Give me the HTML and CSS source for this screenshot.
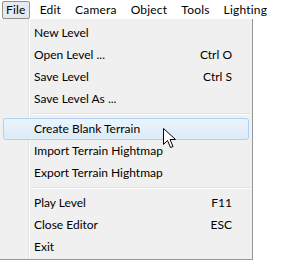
FILE: index.html
```html
<!DOCTYPE html>
<html>
    <head>
        <meta charset="utf-8">
        <link rel="stylesheet" href="styles.css">
        <title>Level Editor</title>
    </head>
    <body>
        <div class="menubar">
            <span class="menu open">File</span>
            <span class="menu">Edit</span>
            <span class="menu">Camera</span>
            <span class="menu">Object</span>
            <span class="menu">Tools</span>
            <span class="menu">Lighting</span>
        </div>
        <div class="dropdown">
            <div class="item"><span class="label">New Level</span><span class="key"></span></div>
            <div class="item"><span class="label">Open Level ...</span><span class="key">Ctrl O</span></div>
            <div class="item"><span class="label">Save Level</span><span class="key">Ctrl S</span></div>
            <div class="item"><span class="label">Save Level As ...</span><span class="key"></span></div>
            <div class="sep"></div>
            <div class="item hover"><span class="label">Create Blank Terrain</span><span class="key"></span></div>
            <div class="item"><span class="label">Import Terrain Hightmap</span><span class="key"></span></div>
            <div class="item"><span class="label">Export Terrain Hightmap</span><span class="key"></span></div>
            <div class="sep"></div>
            <div class="item"><span class="label">Play Level</span><span class="key">F11</span></div>
            <div class="item"><span class="label">Close Editor</span><span class="key">ESC</span></div>
            <div class="item"><span class="label">Exit</span><span class="key"></span></div>
        </div>
        <svg class="cursor" width="14" height="22" viewBox="0 0 14 22">
            <path d="M0.5 0.5 L0.5 16.5 L4.5 12.5 L7.5 19.5 L10 18.5 L7 11.5 L12.5 11.5 Z" fill="#fff" stroke="#000" stroke-width="1" stroke-linejoin="miter"/>
        </svg>
    </body>
</html>
```

FILE: styles.css
```css
body {
    margin: 0;
    padding: 0;
    width: 289px;
    height: 261px;
    overflow: hidden;
    background-color: #fff;
    color: #000;
    font: 12px/16px Lato, "Noto Sans", sans-serif;
    position: relative;
}

.menubar {
    display: flex;
    height: 20px;
    align-items: center;
    padding-left: 2px;
}

.menu {
    padding: 0 3px;
    margin-right: 6px;
    letter-spacing: 0.2px;
    border: 1px solid transparent;
    border-radius: 2px;
}

.menu.open {
    border-color: #919191;
    background-color: #e4eaf0;
}

.dropdown {
    width: 253px;
    height: 241px;
    margin-top: -1px;
    background-color: #f0f0f0;
    border-right: 1px solid #979797;
    border-bottom: 1px solid #979797;
    padding-top: 3px;
    box-sizing: border-box;
    background-image: linear-gradient(to right, transparent 28px, #e2e3e3 28px, #e2e3e3 29px, #fff 29px, #fff 30px, transparent 30px);
}

.item {
    display: flex;
    height: 22px;
    align-items: center;
    margin: 0 3px 0 3px;
    padding: 0 16px 0 30px;
    border: 1px solid transparent;
    border-radius: 3px;
    box-sizing: border-box;
}

.item .label {
    flex: 1;
}

.item.hover {
    border-color: #aecff7;
    background-image: linear-gradient(#eaf4fc, #dcebf8);
}

.sep {
    height: 1px;
    margin: 3px 2px 3px 32px;
    background-color: #e0e0e0;
    border-bottom: 1px solid #fff;
}

.cursor {
    position: absolute;
    left: 163px;
    top: 128px;
}
```
